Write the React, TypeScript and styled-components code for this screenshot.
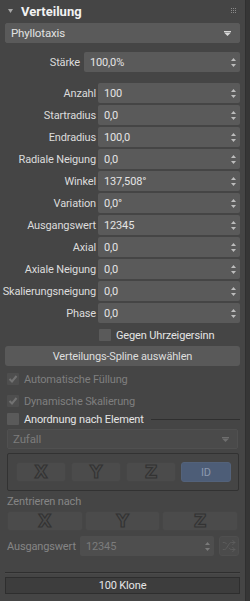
import React from 'react';
import styled, { createGlobalStyle } from 'styled-components';
import { Shuffle } from 'lucide-react';

const GlobalStyle = createGlobalStyle`
  html, body {
    margin: 0;
    padding: 0;
    background: #363636;
  }
  body {
    font-family: Roboto, "Liberation Sans", Arial, sans-serif;
    font-size: 11px;
    letter-spacing: -0.15px;
    color: #dcdcdc;
  }
`;

const Panel = styled.div`
  width: 246px;
  height: 601px;
  box-sizing: border-box;
  background: #454545;
  padding: 0 5px;
  display: flex;
  flex-direction: column;
  border-right: 1px solid #303030;
`;

const Header = styled.div`
  height: 22px;
  display: flex;
  align-items: center;
  padding-left: 3px;
  gap: 8px;
`;

const Title = styled.span`
  font-weight: bold;
  font-size: 13px;
  letter-spacing: 0;
  color: #f2f2f2;
`;

const Grip = styled.svg`
  margin-left: auto;
  margin-right: 3px;
`;

const Select = styled.div<{ $disabled?: boolean; $mt?: number }>`
  height: 20px;
  margin-top: ${(p) => p.$mt ?? 0}px;
  box-sizing: border-box;
  display: flex;
  align-items: center;
  justify-content: space-between;
  padding: 0 8px 0 5px;
  border-radius: 2px;
  background: ${(p) => (p.$disabled ? '#4a4a4a' : '#5a5a5a')};
  border: 1px solid ${(p) => (p.$disabled ? '#505050' : '#5a5a5a')};
  color: ${(p) => (p.$disabled ? '#7c7c7c' : '#e2e2e2')};
  font-size: 11.5px;
  ${(p) => (p.$disabled ? 'margin-left: 2px; margin-right: 2px;' : '')}
`;

const FieldRow = styled.div<{ $label: number; $gap: number; $mt: number }>`
  display: grid;
  grid-template-columns: ${(p) => p.$label}px 1fr;
  column-gap: ${(p) => p.$gap}px;
  height: 20px;
  margin-top: ${(p) => p.$mt}px;
  align-items: center;
`;

const Label = styled.span<{ $disabled?: boolean; $left?: boolean }>`
  justify-self: ${(p) => (p.$left ? 'start' : 'end')};
  white-space: nowrap;
  color: ${(p) => (p.$disabled ? '#858585' : '#dcdcdc')};
`;

const Input = styled.div<{ $disabled?: boolean }>`
  height: 20px;
  box-sizing: border-box;
  border-radius: 2px;
  background: ${(p) => (p.$disabled ? '#4e4e4e' : '#5a5a5a')};
  color: ${(p) => (p.$disabled ? '#7c7c7c' : '#e4e4e4')};
  display: flex;
  align-items: center;
  justify-content: space-between;
  padding: 0 4px 0 6px;
`;

const CheckRow = styled.div<{ $indent?: number; $mt: number; $disabled?: boolean }>`
  display: flex;
  align-items: center;
  gap: 5px;
  height: 18px;
  margin-top: ${(p) => p.$mt}px;
  padding-left: ${(p) => p.$indent ?? 2}px;
  color: ${(p) => (p.$disabled ? '#7f7f7f' : '#e4e4e4')};
`;

const Box = styled.span<{ $disabled?: boolean }>`
  width: 12px;
  height: 12px;
  flex: none;
  border-radius: 1px;
  background: ${(p) => (p.$disabled ? '#4e4e4e' : '#5a5a5a')};
  display: flex;
  align-items: center;
  justify-content: center;
`;

const Rule = styled.span`
  flex: 1;
  height: 0;
  border-top: 1px solid #2f2f2f;
  margin-left: 2px;
`;

const Button = styled.div`
  height: 20px;
  margin-top: 2px;
  border-radius: 3px;
  background: #595959;
  color: #dedede;
  display: flex;
  align-items: center;
  justify-content: center;
`;

const Group = styled.div`
  margin: 4px 1px 0 2px;
  border: 1px solid #323232;
  border-radius: 2px;
  padding: 8px;
  display: grid;
  grid-template-columns: repeat(4, 50px);
  column-gap: 5px;
`;

const AxisButton = styled.div<{ $active?: boolean }>`
  height: 20px;
  box-sizing: border-box;
  border-radius: 3px;
  border: 1px solid ${(p) => (p.$active ? '#53627a' : '#464646')};
  background: ${(p) => (p.$active ? '#4d5d77' : '#4b4b4b')};
  display: flex;
  align-items: center;
  justify-content: center;
  color: #8c98ae;
  font-size: 11px;
`;

const Glyph = styled.span`
  font-family: "DejaVu Sans", sans-serif;
  font-weight: bold;
  font-size: 17px;
  color: #4b4b4b;
  -webkit-text-stroke: 1.2px #333333;
  line-height: 1;
`;

const SubLabel = styled.div`
  height: 16px;
  margin-top: 2px;
  padding-left: 2px;
  display: flex;
  align-items: center;
  color: #858585;
`;

const AxisRow = styled.div`
  margin: 2px 2px 0 2px;
  display: grid;
  grid-template-columns: repeat(3, 1fr);
  column-gap: 2px;
`;

const SeedRow = styled.div`
  display: grid;
  grid-template-columns: 70px 134px 22px;
  column-gap: 3px;
  align-items: center;
  height: 20px;
  margin: 5px 1px 0 2px;
  & > div:last-child {
    margin-left: 2px;
  }
`;

const IconButton = styled.div`
  height: 20px;
  border-radius: 3px;
  background: #4b4b4b;
  border: 1px solid #4f4f4f;
  box-sizing: border-box;
  display: flex;
  align-items: center;
  justify-content: center;
  color: #5f5f5f;
`;

const Separator = styled.div`
  margin-top: 16px;
  height: 1px;
  background: #2f2f2f;
  border-bottom: 1px solid #4a4a4a;
`;

const Status = styled.div`
  margin-top: 3px;
  height: 17px;
  box-sizing: border-box;
  border: 1px solid #2e2e2e;
  background: #3d3d3d;
  display: flex;
  align-items: center;
  justify-content: center;
  color: #e6e6e6;
`;

const Spinner = ({ color = '#bdbdbd' }: { color?: string }) => (
  <svg width="5" height="9" viewBox="0 0 5 9">
    <path d="M2.5 0 L5 3 L0 3 Z" fill={color} />
    <path d="M0 6 L5 6 L2.5 9 Z" fill={color} />
  </svg>
);

const Caret = ({ color = '#d8d8d8' }: { color?: string }) => (
  <svg width="7" height="5" viewBox="0 0 7 5">
    <rect x="0" y="0" width="7" height="1" fill={color} />
    <path d="M0 1.5 L7 1.5 L3.5 5 Z" fill={color} />
  </svg>
);

const Check = () => (
  <svg width="10" height="10" viewBox="0 0 10 10">
    <path d="M1.5 5 L4 7.5 L8.5 2" stroke="#727272" strokeWidth="2" fill="none" />
  </svg>
);

const fields: [string, string][] = [
  ['Anzahl', '100'],
  ['Startradius', '0,0'],
  ['Endradius', '100,0'],
  ['Radiale Neigung', '0,0'],
  ['Winkel', '137,508°'],
  ['Variation', '0,0°'],
  ['Ausgangswert', '12345'],
  ['Axial', '0,0'],
  ['Axiale Neigung', '0,0'],
  ['Skalierungsneigung', '0,0'],
  ['Phase', '0,0'],
];

export default function App() {
  return (
    <>
      <GlobalStyle />
      <Panel>
        <Header>
          <svg width="5" height="4" viewBox="0 0 5 4">
            <path d="M0 0 L5 0 L2.5 4 Z" fill="#a8a8a8" />
          </svg>
          <Title>Verteilung</Title>
          <Grip width="6" height="6" viewBox="0 0 6 6">
            {[0, 2, 4].map((y) =>
              [0, 2, 4].map((x) => <rect key={`${x}-${y}`} x={x} y={y} width="1" height="1" fill="#8a8a8a" />)
            )}
          </Grip>
        </Header>

        <Select $mt={1}>
          <span>Phyllotaxis</span>
          <Caret />
        </Select>

        <FieldRow $label={75} $gap={4} $mt={9}>
          <Label>Stärke</Label>
          <Input>
            <span>100,0%</span>
            <Spinner />
          </Input>
        </FieldRow>

        {fields.map(([label, value], i) => (
          <FieldRow key={label} $label={91} $gap={2} $mt={i === 0 ? 11 : 2}>
            <Label>{label}</Label>
            <Input>
              <span>{value}</span>
              <Spinner />
            </Input>
          </FieldRow>
        ))}

        <CheckRow $indent={94} $mt={3}>
          <Box />
          <span>Gegen Uhrzeigersinn</span>
        </CheckRow>

        <Button>Verteilungs-Spline auswählen</Button>

        <CheckRow $mt={4} $disabled>
          <Box $disabled>
            <Check />
          </Box>
          <span>Automatische Füllung</span>
        </CheckRow>
        <CheckRow $mt={4} $disabled>
          <Box $disabled>
            <Check />
          </Box>
          <span>Dynamische Skalierung</span>
        </CheckRow>
        <CheckRow $mt={0}>
          <Box />
          <span>Anordnung nach Element</span>
          <Rule />
        </CheckRow>

        <Select $mt={1} $disabled>
          <span>Zufall</span>
          <Caret color="#6e6e6e" />
        </Select>

        <Group>
          <AxisButton>
            <Glyph>X</Glyph>
          </AxisButton>
          <AxisButton>
            <Glyph>Y</Glyph>
          </AxisButton>
          <AxisButton>
            <Glyph>Z</Glyph>
          </AxisButton>
          <AxisButton $active>ID</AxisButton>
        </Group>

        <SubLabel>Zentrieren nach</SubLabel>
        <AxisRow>
          <AxisButton>
            <Glyph>X</Glyph>
          </AxisButton>
          <AxisButton>
            <Glyph>Y</Glyph>
          </AxisButton>
          <AxisButton>
            <Glyph>Z</Glyph>
          </AxisButton>
        </AxisRow>

        <SeedRow>
          <Label $left $disabled>
            Ausgangswert
          </Label>
          <Input $disabled>
            <span>12345</span>
            <Spinner color="#7a7a7a" />
          </Input>
          <IconButton>
            <Shuffle size={14} strokeWidth={1.5} />
          </IconButton>
        </SeedRow>

        <Separator />
        <Status>100 Klone</Status>
      </Panel>
    </>
  );
}
